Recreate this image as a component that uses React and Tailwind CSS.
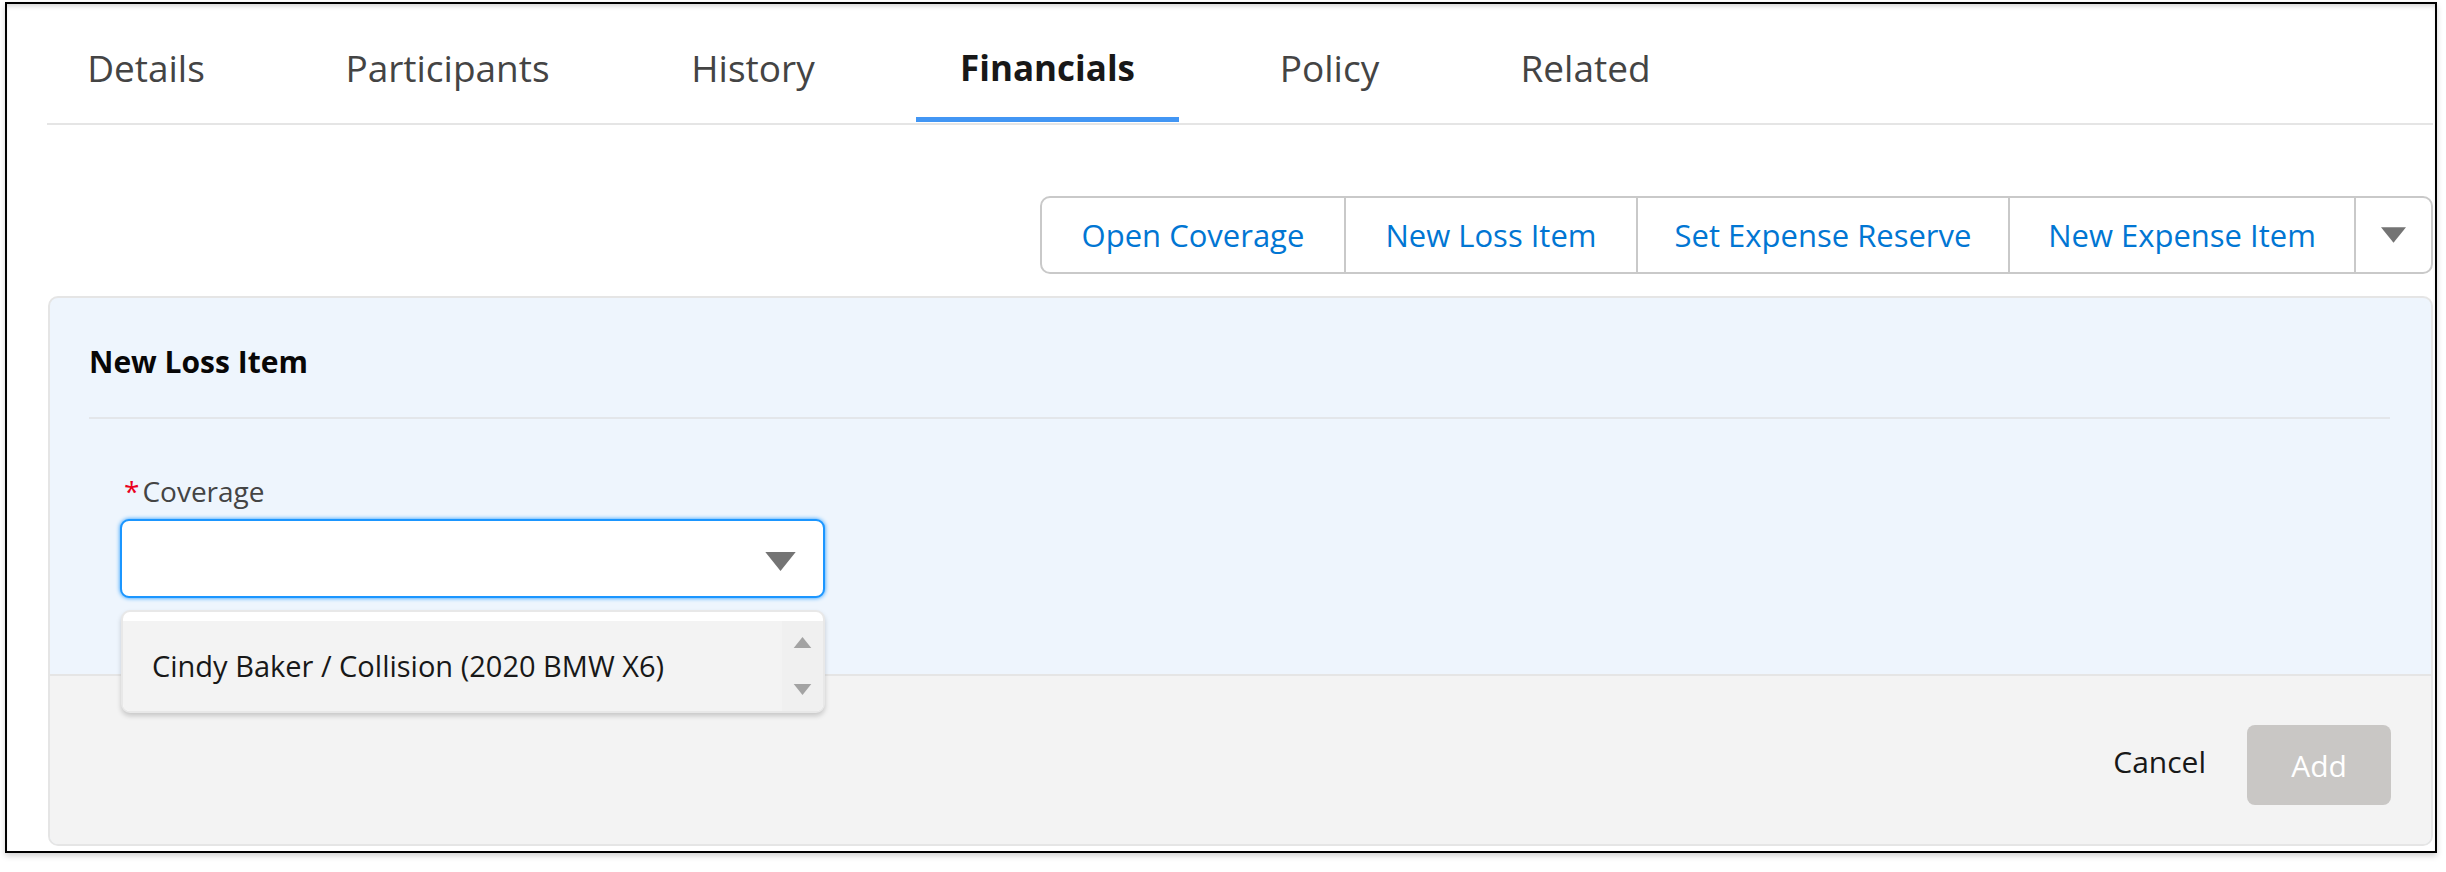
import React from "react";

const tabs = [
  { label: "Details", width: "w-[198px]" },
  { label: "Participants", width: "w-[285px]" },
  { label: "History", width: "w-[206px]" },
  { label: "Financials", width: "w-[263px]", active: true },
  { label: "Policy", width: "w-[181px]" },
  { label: "Related", width: "w-[211px]" },
];

const actions = [
  { label: "Open Coverage", width: "w-[302px]" },
  { label: "New Loss Item", width: "w-[292px] border-l-2" },
  { label: "Set Expense Reserve", width: "w-[372px] border-l-2" },
  { label: "New Expense Item", width: "w-[346px] border-l-2" },
];

function Caret({ className }) {
  return (
    <svg viewBox="0 0 32 20" className={className}>
      <polygon points="0,0 32,0 16,20" fill="currentColor" />
    </svg>
  );
}

export default function App() {
  return (
    <div className="w-[2446px] h-[872px] bg-white pt-[2px] pl-[5px] font-['Open_Sans','Noto_Sans',sans-serif]">
      <div className="w-[2432px] h-[851px] border-2 border-black bg-white shadow-[0_3px_6px_rgba(0,0,0,0.18),inset_0_4px_5px_-2px_rgba(0,0,0,0.18)] pl-[40px] pr-[2px] overflow-hidden">
        {/* tabs */}
        <nav className="flex gap-[60px] pb-[1px] border-b-2 border-[#e5e5e5]">
          {tabs.map((t) => (
            <div
              key={t.label}
              className={`${t.width} h-[118px] pt-[40px] text-center border-b-[5px] ${
                t.active
                  ? "border-[#4296f4] text-[#181818] font-bold text-[35px] leading-[48px]"
                  : "border-transparent text-[#444444] text-[37px] leading-[48px]"
              }`}
            >
              {t.label}
            </div>
          ))}
        </nav>

        {/* action buttons */}
        <div className="mt-[71px] flex justify-end">
          <div className="flex h-[78px] border-2 border-[#c9c9c9] rounded-[10px] bg-white">
            {actions.map((a) => (
              <button
                key={a.label}
                className={`${a.width} border-[#c9c9c9] flex items-center justify-center text-[31px] text-[#0176d3]`}
              >
                {a.label}
              </button>
            ))}
            <button className="w-[77px] border-l-2 border-[#c9c9c9] flex items-center justify-center text-[#747474]">
              <Caret className="w-[25px] h-[16px]" />
            </button>
          </div>
        </div>

        {/* new loss item panel */}
        <div className="mt-[22px] ml-[1px] h-[550px] flex flex-col border-2 border-[#e5e5e5] rounded-[10px] bg-[#eef5fd]">
          <div className="ml-[39px] mr-[41px] pt-[44px] pb-[35px] border-b-2 border-[#e3e6ea]">
            <h2 className="text-[30px] leading-[40px] font-bold text-[#080707]">New Loss Item</h2>
          </div>

          <div className="flex-1 px-[70px]">
            <div className="mt-[54px] pl-[4px] text-[28px] leading-[36px] text-[#444444]">
              <span className="text-[#ea001e] mr-[3px]">*</span>Coverage
            </div>
            <div className="relative mt-[10px] w-[705px]">
              <div className="h-[79px] rounded-[9px] border-2 border-[#1b96ff] bg-white shadow-[0_0_4px_#1b96ff] flex items-center justify-end pr-[27px] pt-[6px] text-[#747474]">
                <Caret className="w-[31px] h-[19px]" />
              </div>

              {/* open list */}
              <div className="absolute left-[1px] top-[91px] w-[704px] h-[103px] rounded-[9px] border-2 border-[#e8e8e8] bg-white shadow-[0_3px_5px_rgba(0,0,0,0.18)] pt-[9px] overflow-hidden">
                <div className="h-[90px] flex bg-[#f3f3f3]">
                  <div className="flex-1 flex items-center pl-[29px] text-[29px] text-[#181818]">
                    Cindy Baker / Collision (2020 BMW X6)
                  </div>
                  <div className="w-[41px] flex flex-col items-center justify-between pt-[16px] pb-[16px] bg-[#f0f0f0] text-[#a3a3a3]">
                    <Caret className="w-[19px] h-[11px] rotate-180" />
                    <Caret className="w-[19px] h-[11px]" />
                  </div>
                </div>
              </div>
            </div>
          </div>

          <div className="h-[170px] border-t-2 border-[#e5e5e5] bg-[#f3f3f3] rounded-b-[8px] flex items-center justify-end gap-[41px] pt-[10px] pr-[40px]">
            <button className="text-[30px] text-[#181818] mb-[8px]">Cancel</button>
            <button className="w-[144px] h-[80px] rounded-[8px] bg-[#c9c7c5] text-white text-[30px]">Add</button>
          </div>
        </div>
      </div>
    </div>
  );
}
